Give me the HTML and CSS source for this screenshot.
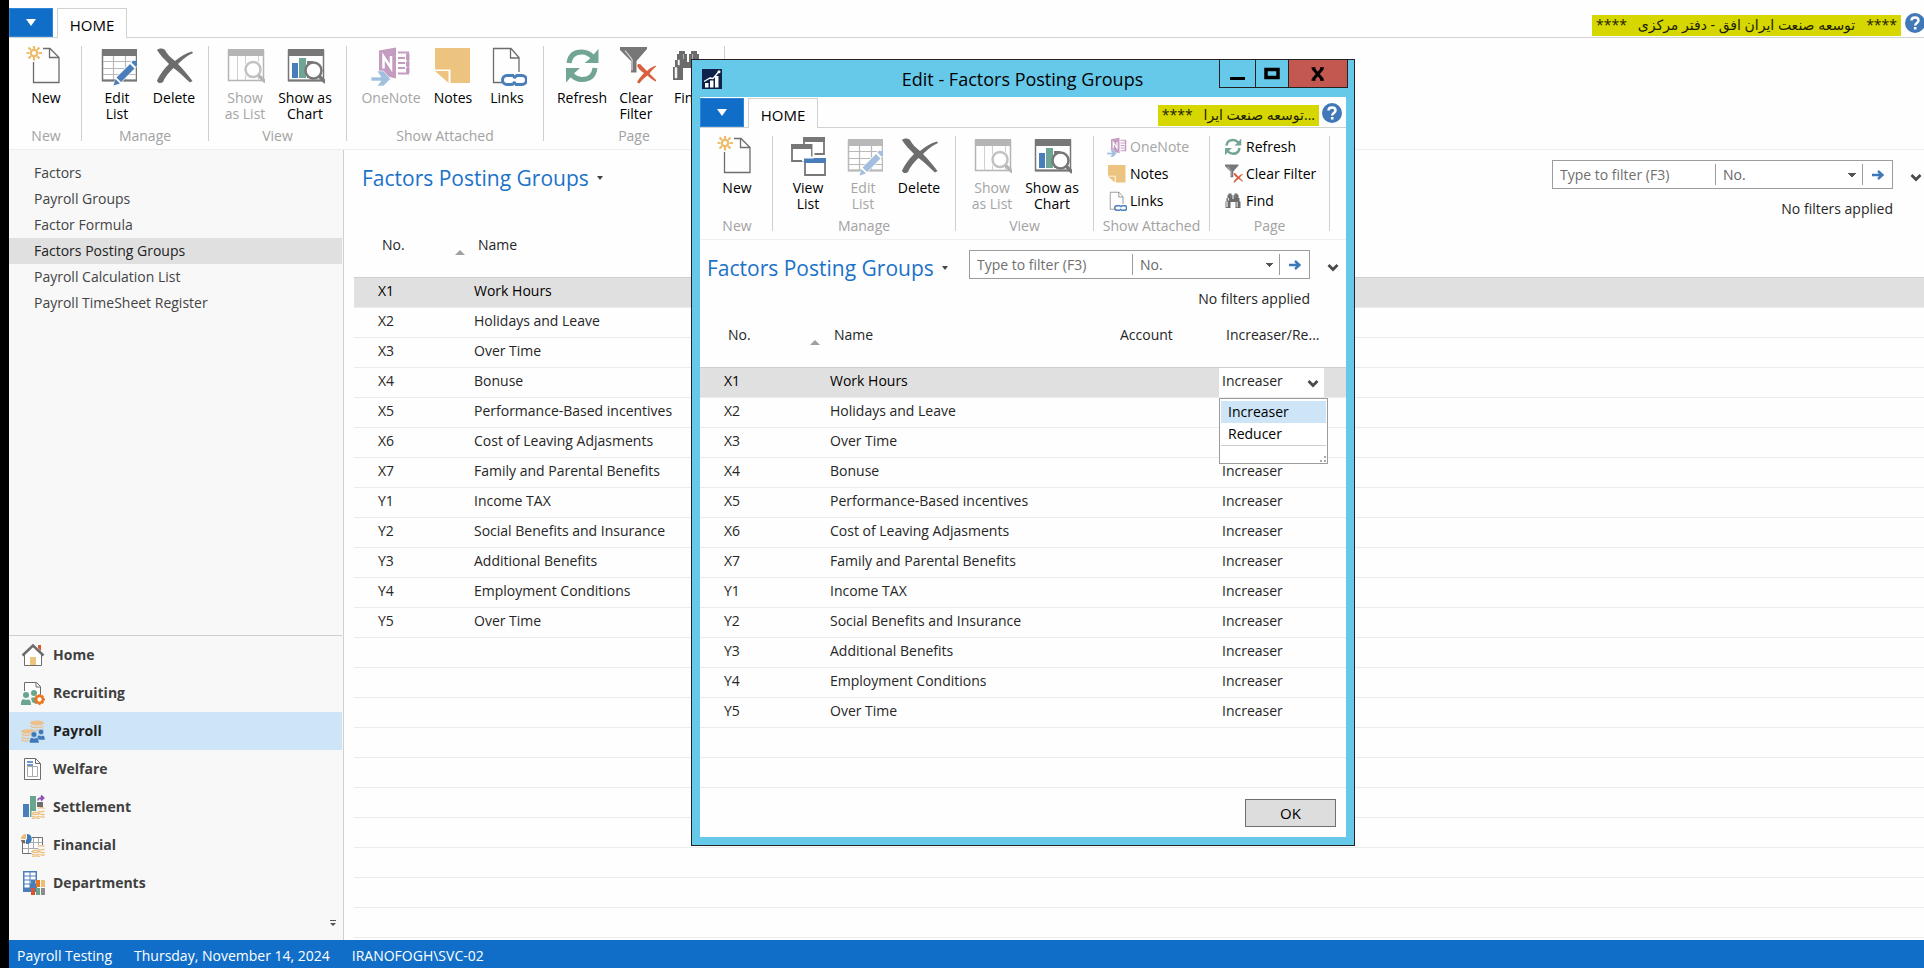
FILE: index.html
```html
<!DOCTYPE html>
<html lang="en">
<head>
<meta charset="utf-8">
<title>Factors Posting Groups</title>
<link rel="stylesheet" href="styles.css">
</head>
<body>
<svg class="sprite" aria-hidden="true">
  <symbol id="i-new" viewBox="0 0 40 40">
    <path d="M7.5 16v20.5h25.500V11.500L24 2.500h-7M23.500 2.500v9h9.500" fill="none" stroke="#6d6d6d" stroke-width="1.300"/>
    <g stroke="#edbd6c" stroke-width="2.200" fill="none"><circle cx="8" cy="7" r="3.200"/><path d="M8 0v3M8 11v3.500M.5 7h3M12.500 7h3.500M2.500 1.500l2.500 2.500M11 10l2.500 2.500M13.500 1.500L11 4M5 10l-2.500 2.500"/></g>
  </symbol>
  <symbol id="i-editlist" viewBox="0 0 40 40">
    <path d="M5.500 4.500h34v30h-34z" fill="#fff" stroke="currentColor" stroke-width="1.500"/>
    <path d="M5 3h35v7H5z" fill="currentColor"/>
    <path d="M6 15.500h33M6 22.500h33M6 28.500h33M16.500 10v24M28.500 10v24" stroke="#b9b9b9" stroke-width="1.200"/>
    <path d="M5 34.500h35" stroke="currentColor" stroke-width="2"/>
    <path d="M16 40l2.500-8L35 14.500l6 5L24 37z" fill="#fff"/>
    <path d="M16.500 39.500l2-6.500 4.500 4.500zM19.500 31.500L33 18l4.500 4.500L24 36zM34.500 16.500l1.500-2 1.500.5 2.500-.5v2.500l1 2-2 2z" fill="var(--pen)"/>
  </symbol>
  <symbol id="i-delete" viewBox="0 0 40 40">
    <path d="M3 4c2-2 6-2 8 0 2 4 6 8 10 11 5-4 11-8 17-9.500l1 1.500C34 9 28 14 24 18c5 5 9 10 14.500 17l-2.500 1.500C31 32 25 26 19.500 22 15 26 11 31 9 36c-2 2-6 1-6-1.500C6 28 10 23 15 18 11 14 6 9 3 4z" fill="#6d6d6d"/>
  </symbol>
  <symbol id="i-showlist" viewBox="0 0 40 40">
    <path d="M3.500 4.500h35v30h-35zM3 34.500h36" fill="none" stroke="#b5b5b5" stroke-width="1.500"/>
    <path d="M3 3h36v7H3z" fill="#b5b5b5"/>
    <path d="M12.500 10v24M20.500 10v24M33.500 10v24" stroke="#d0d0d0"/>
    <circle cx="28" cy="23.500" r="9.500" fill="#fff"/><circle cx="28" cy="23.500" r="7.500" fill="#fff" stroke="#c2c2c2" stroke-width="2.500"/>
    <path d="M33.500 29.500l7 6.500" stroke="#b5b5b5" stroke-width="3.500"/>
  </symbol>
  <symbol id="i-chart" viewBox="0 0 40 40">
    <path d="M3.500 4.500h35v30h-35z" fill="#fff" stroke="#777" stroke-width="1.500"/>
    <path d="M3 3h36v7H3zM3 33.500h36v2H3z" fill="#777"/>
    <path d="M7 17h6v15H7z" fill="#4a7ebb"/><path d="M14 12h7v20h-7z" fill="#6fa594"/><path d="M22 15h6v17h-6z" fill="#777"/>
    <circle cx="28.500" cy="24.500" r="8" fill="#fff" stroke="#777" stroke-width="2.500"/>
    <path d="M34 30l6.500 6.500" stroke="#777" stroke-width="3.500"/>
  </symbol>
  <symbol id="i-onenote" viewBox="0 0 40 40">
    <path d="M8 4.500l17-3v31L8 28.500z" fill="#c39cc0"/>
    <path d="M12.500 22.500v-12l7.500 11.500v-12" fill="none" stroke="#fff" stroke-width="2.500"/>
    <path d="M27 6.500h10v21H27M27 12h7M27 17h7M27 22h7" fill="none" stroke="#c39cc0" stroke-width="2.200"/><path d="M35 8h3.500v6H35zM35 15.500h3.500v5H35zM35 22h3.500v5H35z" fill="#c39cc0"/>
    <path d="M0 31h10l-4-6h6.500l7 8-7 7H6l4-5H0z" fill="#a3bfdf" stroke="#fff" stroke-width=".6"/>
  </symbol>
  <symbol id="i-notes" viewBox="0 0 40 40">
    <path d="M2 2h35v35H17.500V23.500H2z" fill="#ecc480"/><path d="M2 25h13.500v12z" fill="#ecc480"/>
  </symbol>
  <symbol id="i-links" viewBox="0 0 40 40">
    <path d="M15 36.500H6.500v-34H24l8 9V26M23.500 2.500V12H32" fill="none" stroke="#6d6d6d" stroke-width="1.300"/>
    <g fill="none" stroke="#4a7ebb" stroke-width="3"><path d="M27 29.500h-7a4.500 4.500 0 0 0 0 9h4a4.500 4.500 0 0 0 4-3"/><path d="M28 38.500h7a4.500 4.500 0 0 0 0-9h-4a4.500 4.500 0 0 0-4 3"/></g>
  </symbol>
  <symbol id="i-refresh" viewBox="0 0 40 40">
    <g fill="none" stroke="#72a594" stroke-width="5"><path d="M7 17C8 9 13 6 20 6c5 0 8 2 11 5.500"/><path d="M33 22c-1 8-6 11.500-13 11.500-5 0-8-2-11-5.500"/></g>
    <path d="M36.500 3v14H22.500l5-4zM4 36.500V22h14l-5 4.500z" fill="#72a594"/>
  </symbol>
  <symbol id="i-filter" viewBox="0 0 40 40">
    <path d="M4 1h27v2L20.500 15v11.500H15V15L4 4z" fill="#777"/><path d="M9 4.500l7 9v11" fill="none" stroke="#ddd" stroke-width="1.200"/>
    <path d="M21 19c2-2 4-1 5 1l5 5c3-3 6-5 11-6-3 2-6 5-8.500 8.500l8.500 8.500c-4-1-7-3-10.500-6.500C28 32 25 35 23.500 37.500l-2.500-1c1-3 4-6 7-9.500-3-2-6-4-7-8z" fill="#d9603f"/>
  </symbol>
  <symbol id="i-find" viewBox="0 0 40 40">
    <path d="M11 5h6v3h2v8h2V8h2V5h6v3h2v6h2v7h2v13H25V22H15v12H5V21h2v-7h2V8h2z" fill="#6b6b6b"/>
    <path d="M7 21.500V32h2V21.500zM27.500 22v10h1.500V22zM10 14v5h1.500v-5zM15.500 8v5M24.500 8v5" fill="#fff" stroke="#ddd" stroke-width=".6"/>
  </symbol>
  <symbol id="i-viewlist" viewBox="0 0 40 40">
    <g fill="#fff" stroke="#777" stroke-width="1.800"><path d="M16 2h20v16H16z"/><path d="M4 9h20v16H4z"/><path d="M17 23h20v16H17z"/></g>
    <path d="M15 1h22v5H15zM3 8h22v5H3z" fill="#777"/><path d="M16 22h22v5H16z" fill="#4a7ebb"/>
    <path d="M25.500 7v14M14 21.500h12M15 21.500v4" stroke="#fff" stroke-width="2"/>
  </symbol>
  <symbol id="i-help" viewBox="0 0 20 20">
    <circle cx="10" cy="10" r="10" fill="#4178b8"/>
    <path d="M6.500 7.500C6.500 3.500 13.500 3.500 13.500 7.500c0 2.500-3.300 2.500-3.300 5" fill="none" stroke="#fff" stroke-width="2.500"/><path d="M8.900 14h2.600v2.500H8.900z" fill="#fff"/>
  </symbol>
  <symbol id="i-down" viewBox="0 0 12 8"><path d="M1.500 1L6 5.500 10.500 1" fill="none" stroke="#4a4a4a" stroke-width="2.800"/></symbol>
  <symbol id="i-go" viewBox="0 0 12 10"><path d="M0 5h10M6 1l4.500 4L6 9" fill="none" stroke="#3f78b8" stroke-width="2.400"/></symbol>

  <symbol id="n-home" viewBox="0 0 24 24">
    <path d="M3.500 11v11.500h17V11L12 3z" fill="#fff" stroke="#6d6d6d"/><path d="M17 2h3v6l-3-3z" fill="#d9532c"/>
    <path d="M9 14h6v8H9z" fill="#ecc480"/><path d="M1.500 12.500L12 2.500l10.500 10" fill="none" stroke="#6d6d6d" stroke-width="2.500"/>
  </symbol>
  <symbol id="n-recruit" viewBox="0 0 24 24">
    <path d="M3.500 10V1.500h12l4 4V14M15 1.500v4.500h4.500" fill="#fff" stroke="#6d6d6d"/>
    <g fill="#68a58f"><circle cx="5" cy="14" r="3"/><path d="M0 24c0-6 2-6.500 5-5 3-1.500 5 0 5 5z"/><circle cx="13" cy="12" r="3"/><path d="M10 17c3-1 5-1 6 1l-1 5-4-2z"/></g>
    <circle cx="18.500" cy="18.500" r="3.400" fill="#fff" stroke="#e8761f" stroke-width="2.500"/><path d="M18.500 13.200v2M18.500 22v2M13.200 18.500h2M22 18.500h2M14.700 14.700l1.500 1.500M22.300 14.700l-1.500 1.500M14.700 22.300l1.500-1.500M22.300 22.300l-1.500-1.500" stroke="#e8761f" stroke-width="2"/>
  </symbol>
  <symbol id="n-payroll" viewBox="0 0 24 24">
    <g fill="none" stroke="#ecc08a" stroke-width="1.300"><path d="M9.500 7c2 2 11 2 13 0M9.500 10c2 2 11 2 13 0M.5 15c2 2 8 2 10 0M.5 18c2 2 7 2 8 1M.5 20.500c2 2 6 2 8 1"/></g>
    <ellipse cx="16" cy="4" rx="7" ry="2.500" fill="#ecc08a"/><ellipse cx="6" cy="12.500" rx="6" ry="2.200" fill="#ecc08a"/>
    <g fill="#3f78b8" stroke="#cde6f7" stroke-width=".5"><circle cx="20" cy="13" r="2.700"/><path d="M16 21c0-6 2-5 4-4 3-1.500 4 0 4 4z"/><circle cx="13" cy="15.500" r="2.900"/><path d="M8.500 24c0-6 2-6 4.500-4.500 3-1.500 5-1.500 5 4.500z"/></g>
  </symbol>
  <symbol id="n-welfare" viewBox="0 0 24 24">
    <path d="M3.500 1.500h11l5 5v16h-16zM14.500 1.500v5h5" fill="#fff" stroke="#6d6d6d"/><path d="M6 5h6M6 8h6" stroke="#3f78b8" stroke-width="1.300"/><path d="M6.500 9.500h10v10h-10zM11.500 9.500v10" fill="#fff" stroke="#aaa"/>
  </symbol>
  <symbol id="n-settle" viewBox="0 0 24 24">
    <path d="M2 9h6v13H2z" fill="#4a7ebb"/><path d="M9 1h6v21H9z" fill="#68a58f"/><path d="M16 7h6v5h-6z" fill="#6d6d6d"/>
    <path d="M17 5.500c0-2 1-2.500 5-2.500M20 .5L22.500 3 20 5.500" fill="none" stroke="#8a52ae" stroke-width="1.800"/>
    <path d="M10.500 16h9v8h-9z" fill="#f8f8f8"/><path d="M17 13.500c2-1 5-1 6.500 0M17 16c2 1 5 1 6.500 0M19 19c2 1 4 1 4.500 0M19 21.500c2 1 4 1 4.500 0M11 18.500c2-1.500 6-1.500 7.500 0-2 1.500-5.500 1.500-7.500 0zM11 21c2 1.500 6 1.500 7.500 0M11 23c2 1.500 6 1.500 7.500 0" fill="none" stroke="#ecbd7a" stroke-width="1.300"/>
  </symbol>
  <symbol id="n-finance" viewBox="0 0 24 24">
    <path d="M1.500 4.500h20v16h-20z" fill="#fff" stroke="#6d6d6d"/><path d="M2 9.500h19M2 15.500h19M7.500 5v15M12.500 5v15M17.500 5v15" stroke="#aaa"/>
    <path d="M-1 0h12v9H-1z" fill="#f8f8f8"/><path d="M5 1v5H0c0-3 2-5 5-5z" fill="#ecbd7a"/><path d="M6 1c7 0 6 11-1 10V7l1-1z" fill="#3f78b8"/><path d="M0 7h4v3.500C2 10.500 0 9 0 7z" fill="#6d6d6d"/>
    <path d="M10.500 16h13v8h-13zM17 12h7v5h-7z" fill="#f8f8f8"/><path d="M17 13.500c2-1 5-1 6.500 0M17 16c2 1 5 1 6.500 0M19 19c2 1 4 1 4.500 0M19 21.500c2 1 4 1 4.500 0M11 18.500c2-1.500 6-1.500 7.500 0-2 1.500-5.500 1.500-7.500 0zM11 21c2 1.500 6 1.500 7.500 0M11 23c2 1.500 6 1.500 7.500 0" fill="none" stroke="#ecbd7a" stroke-width="1.300"/>
  </symbol>
  <symbol id="n-dept" viewBox="0 0 24 24">
    <path d="M2 0h14v21H2z" fill="#4a7ebb"/><path d="M3.500 1.500h5v3h-5zM9.500 1.500h5v3h-5zM3.500 5.500h5v3h-5zM9.500 5.500h5v3h-5zM3.500 9.500h5v3h-5zM9.500 9.500h5v3h-5zM3.500 13.500h5v3h-5z" fill="#fff"/>
    <path d="M10 9h4v7h-4z" fill="#4a7ebb"/><path d="M15 9h4v7h-4z" fill="#e8761f"/><path d="M20 9h4v7h-4z" fill="#ecbd7a"/><path d="M10 17h4v7h-4z" fill="#d9532c"/><path d="M15 17h4v7h-4z" fill="#68a58f"/><path d="M20 17h4v7h-4z" fill="#8c8c8c"/>
  </symbol>
</svg>

<div class="app">
  <header class="tabs">
    <button class="file" aria-label="Application menu"><span class="tri"></span></button>
    <button class="tab">HOME</button>
    <div class="tabs-end">
      <span class="company" dir="rtl">**** &nbsp; توسعه صنعت ایران افق - دفتر مرکزی &nbsp; ****</span>
      <button class="help" aria-label="Help"><svg><use href="#i-help"/></svg></button>
    </div>
  </header>

  <div class="ribbon">
    <section class="group">
      <div class="tools"><button class="tool w60"><svg><use href="#i-new"/></svg>New</button></div>
      <h2>New</h2>
    </section>
    <section class="group">
      <div class="tools">
        <button class="tool w58"><svg><use href="#i-editlist"/></svg>Edit<br>List</button>
        <button class="tool w56"><svg><use href="#i-delete"/></svg>Delete</button>
      </div>
      <h2>Manage</h2>
    </section>
    <section class="group view">
      <div class="tools">
        <button class="tool w60" disabled><svg><use href="#i-showlist"/></svg>Show<br>as List</button>
        <button class="tool w60"><svg><use href="#i-chart"/></svg>Show as<br>Chart</button>
      </div>
      <h2>View</h2>
    </section>
    <section class="group">
      <div class="tools">
        <button class="tool w76" disabled><svg><use href="#i-onenote"/></svg>OneNote</button>
        <button class="tool w48"><svg><use href="#i-notes"/></svg>Notes</button>
        <button class="tool w60"><svg><use href="#i-links"/></svg>Links</button>
      </div>
      <h2>Show Attached</h2>
    </section>
    <section class="group">
      <div class="tools">
        <button class="tool w64"><svg><use href="#i-refresh"/></svg>Refresh</button>
        <button class="tool w44"><svg><use href="#i-filter"/></svg>Clear<br>Filter</button>
        <button class="tool w60"><svg><use href="#i-find"/></svg>Find</button>
      </div>
      <h2>Page</h2>
    </section>
  </div>

  <div class="body">
    <aside class="side">
      <nav class="pages" aria-label="Pages">
        <a href="#factors">Factors</a>
        <a href="#groups">Payroll Groups</a>
        <a href="#formula">Factor Formula</a>
        <a href="#posting" class="on">Factors Posting Groups</a>
        <a href="#calc">Payroll Calculation List</a>
        <a href="#timesheet">Payroll TimeSheet Register</a>
      </nav>
      <nav class="areas" aria-label="Areas">
        <a href="#home"><svg><use href="#n-home"/></svg>Home</a>
        <a href="#recruiting"><svg><use href="#n-recruit"/></svg>Recruiting</a>
        <a href="#payroll" class="on"><svg><use href="#n-payroll"/></svg>Payroll</a>
        <a href="#welfare"><svg><use href="#n-welfare"/></svg>Welfare</a>
        <a href="#settlement"><svg><use href="#n-settle"/></svg>Settlement</a>
        <a href="#financial"><svg><use href="#n-finance"/></svg>Financial</a>
        <a href="#departments"><svg><use href="#n-dept"/></svg>Departments</a>
      </nav>
      <button class="more" aria-label="Configure areas"><svg viewBox="0 0 6 6"><path d="M0 0h6v1H0zM0 3h6L3 6z" fill="#555"/></svg></button>
    </aside>

    <main class="content">
      <div class="head">
        <h1>Factors Posting Groups <span class="caret"></span></h1>
        <div class="filters">
          <form class="filter">
            <input type="text" placeholder="Type to filter (F3)" aria-label="Filter text">
            <select aria-label="Filter field"><option>No.</option></select>
            <button type="button" aria-label="Apply filter"><svg><use href="#i-go"/></svg></button>
          </form>
          <p>No filters applied</p>
        </div>
        <button class="expand" aria-label="Expand filters"><svg><use href="#i-down"/></svg></button>
      </div>
      <div class="grid">
        <table>
          <thead><tr><th class="c-no">No.<span class="sort"></span></th><th>Name</th></tr></thead>
          <tbody>
            <tr class="on"><td>X1</td><td>Work Hours</td></tr>
            <tr><td>X2</td><td>Holidays and Leave</td></tr>
            <tr><td>X3</td><td>Over Time</td></tr>
            <tr><td>X4</td><td>Bonuse</td></tr>
            <tr><td>X5</td><td>Performance-Based incentives</td></tr>
            <tr><td>X6</td><td>Cost of Leaving Adjasments</td></tr>
            <tr><td>X7</td><td>Family and Parental Benefits</td></tr>
            <tr><td>Y1</td><td>Income TAX</td></tr>
            <tr><td>Y2</td><td>Social Benefits and Insurance</td></tr>
            <tr><td>Y3</td><td>Additional Benefits</td></tr>
            <tr><td>Y4</td><td>Employment Conditions</td></tr>
            <tr><td>Y5</td><td>Over Time</td></tr>
          </tbody>
        </table>
        <div class="blank"></div>
      </div>
    </main>
  </div>

  <footer class="status"><span>Payroll Testing</span><span>Thursday, November 14, 2024</span><span>IRANOFOGH\SVC-02</span></footer>
</div>

<div class="dialog" role="dialog" aria-labelledby="dlg-title">
  <div class="caption">
    <svg class="logo" viewBox="0 0 20 20"><path d="M0 0h20v20H0z" fill="#0d2349"/><path d="M3 14h3.500v4.500H3zM8 11.500h3.500v7H8zM13 7h3.500v11.500H13z" fill="#fff"/><path d="M2 12.500l6-3.500 3 .5L17 2.500" fill="none" stroke="#fff" stroke-width="1.300"/><circle cx="17" cy="2.800" r="1.500" fill="#fff"/></svg>
    <h2 id="dlg-title">Edit - Factors Posting Groups</h2>
    <div class="winbtns">
      <button aria-label="Minimize"><svg viewBox="0 0 16 14"><path d="M0 10h15v3H0z"/></svg></button>
      <button class="max" aria-label="Maximize"><svg viewBox="0 0 16 14"><path d="M2 2.500h12v8H2z" fill="none" stroke="#000" stroke-width="3.500"/></svg></button>
      <button class="close" aria-label="Close"><svg viewBox="0 0 16 14"><path d="M3 1.500l9.500 11M12.500 1.500L3 12.500" stroke="#000" stroke-width="3"/><path d="M1.500 1h4M10 1h4M1.500 13h4M10 13h4" stroke="#000" stroke-width="1.500"/></svg></button>
    </div>
  </div>
  <div class="pane">
    <div class="tabs">
      <button class="file" aria-label="Application menu"><span class="tri"></span></button>
      <button class="tab">HOME</button>
      <div class="tabs-end">
        <span class="company" dir="rtl">...توسعه صنعت ایرا &nbsp; ****</span>
        <button class="help" aria-label="Help"><svg><use href="#i-help"/></svg></button>
      </div>
    </div>
    <div class="ribbon">
      <section class="group">
        <div class="tools"><button class="tool w60"><svg><use href="#i-new"/></svg>New</button></div>
        <h2>New</h2>
      </section>
      <section class="group">
        <div class="tools">
          <button class="tool w58"><svg><use href="#i-viewlist"/></svg>View<br>List</button>
          <button class="tool w52" disabled><svg><use href="#i-editlist"/></svg>Edit<br>List</button>
          <button class="tool w60"><svg><use href="#i-delete"/></svg>Delete</button>
        </div>
        <h2>Manage</h2>
      </section>
      <section class="group view">
        <div class="tools">
          <button class="tool w60" disabled><svg><use href="#i-showlist"/></svg>Show<br>as List</button>
          <button class="tool w60"><svg><use href="#i-chart"/></svg>Show as<br>Chart</button>
        </div>
        <h2>View</h2>
      </section>
      <section class="group attached">
        <div class="stack">
          <button class="mini" disabled><svg><use href="#i-onenote"/></svg>OneNote</button>
          <button class="mini"><svg><use href="#i-notes"/></svg>Notes</button>
          <button class="mini"><svg><use href="#i-links"/></svg>Links</button>
        </div>
        <h2>Show Attached</h2>
      </section>
      <section class="group page">
        <div class="stack">
          <button class="mini"><svg><use href="#i-refresh"/></svg>Refresh</button>
          <button class="mini"><svg><use href="#i-filter"/></svg>Clear Filter</button>
          <button class="mini"><svg><use href="#i-find"/></svg>Find</button>
        </div>
        <h2>Page</h2>
      </section>
    </div>
    <div class="head">
      <h1>Factors Posting Groups <span class="caret"></span></h1>
      <div class="filters">
        <form class="filter">
          <input type="text" placeholder="Type to filter (F3)" aria-label="Filter text">
          <select aria-label="Filter field"><option>No.</option></select>
          <button type="button" aria-label="Apply filter"><svg><use href="#i-go"/></svg></button>
        </form>
        <p>No filters applied</p>
      </div>
      <button class="expand" aria-label="Expand filters"><svg><use href="#i-down"/></svg></button>
    </div>
    <div class="grid">
      <table>
        <thead><tr><th class="c-no">No.<span class="sort"></span></th><th>Name</th><th class="c-acc">Account</th><th class="c-inc">Increaser/Re...</th></tr></thead>
        <tbody>
          <tr class="on"><td>X1</td><td>Work Hours</td><td></td><td class="edit">
            <div class="combo">
              <select aria-label="Increaser/Reducer"><option>Increaser</option><option>Reducer</option></select>
              <svg><use href="#i-down"/></svg>
              <div class="popup">
                <ul role="listbox" aria-label="Choices"><li class="on" role="option" aria-selected="true">Increaser</li><li role="option">Reducer</li></ul>
                <svg viewBox="0 0 6 6"><path d="M4 0h2v2H4zM4 4h2v2H4zM0 4h2v2H0z" fill="#aaa"/></svg>
              </div>
            </div></td></tr>
          <tr><td>X2</td><td>Holidays and Leave</td><td></td><td></td></tr>
          <tr><td>X3</td><td>Over Time</td><td></td><td></td></tr>
          <tr><td>X4</td><td>Bonuse</td><td></td><td>Increaser</td></tr>
          <tr><td>X5</td><td>Performance-Based incentives</td><td></td><td>Increaser</td></tr>
          <tr><td>X6</td><td>Cost of Leaving Adjasments</td><td></td><td>Increaser</td></tr>
          <tr><td>X7</td><td>Family and Parental Benefits</td><td></td><td>Increaser</td></tr>
          <tr><td>Y1</td><td>Income TAX</td><td></td><td>Increaser</td></tr>
          <tr><td>Y2</td><td>Social Benefits and Insurance</td><td></td><td>Increaser</td></tr>
          <tr><td>Y3</td><td>Additional Benefits</td><td></td><td>Increaser</td></tr>
          <tr><td>Y4</td><td>Employment Conditions</td><td></td><td>Increaser</td></tr>
          <tr><td>Y5</td><td>Over Time</td><td></td><td>Increaser</td></tr>
        </tbody>
      </table>
      <div class="blank"></div>
    </div>
    <div class="actions"><button class="ok">OK</button></div>
  </div>
</div>
</body>
</html>
```

FILE: styles.css
```css
* { box-sizing: border-box; }

body {
  margin: 0;
  background: #000;
  color: #262626;
  font: 15px/20px "Open Sans", "Noto Sans", "DejaVu Sans", sans-serif;
}

h1, h2, p, ul { margin: 0; padding: 0; font-weight: 400; }
ul { list-style: none; }
a { color: inherit; text-decoration: none; }
svg { display: block; }
.sprite { position: absolute; width: 0; height: 0; }

button, input, select {
  margin: 0;
  padding: 0;
  border: 0;
  border-radius: 0;
  background: none;
  color: inherit;
  font: inherit;
  appearance: none;
}

.app {
  display: flex;
  flex-direction: column;
  min-height: 100vh;
  margin-left: 9px;
  background: #fefefe;
}

/* Tab strip */
.tabs {
  display: flex;
  align-items: flex-end;
  height: 38px;
  border-bottom: 1px solid #d2d2d2;
}
.file {
  display: flex;
  align-items: center;
  justify-content: center;
  width: 44px;
  height: 29px;
  background: #106ec8;
  border: 1px solid #2f85d6;
}
.tri {
  border: 5px solid transparent;
  border-top: 7px solid #fff;
  border-bottom: 0;
}
.tab {
  width: 70px;
  height: 30px;
  margin: 0 0 -1px 4px;
  padding-top: 2px;
  border: 1px solid #d2d2d2;
  border-bottom: 0;
  background: #fefefe;
  color: #000;
}
.tabs-end {
  display: flex;
  align-items: flex-start;
  gap: 4px;
  margin-left: auto;
  height: 24px;
}
.company {
  height: 21px;
  margin-top: 2px;
  padding: 0 4px;
  background: #d6d700;
  color: #1c1c00;
  font-size: 14px;
  white-space: nowrap;
}
.app .tabs-end { margin-right: -1px; }
.help svg { width: 20px; height: 20px; }

/* Ribbon */
.ribbon {
  display: flex;
  height: 112px;
  padding: 8px 0;
  border-bottom: 1px solid #efefef;
  font-size: 14px;
}
.group {
  display: flex;
  flex-direction: column;
  justify-content: space-between;
  padding: 0 6px;
  border-right: 1px solid #cfcfcf;
}
.group:first-child { padding: 0 5px 0 7px; }
.group h2 {
  color: #a2a2a2;
  font-size: 14px;
  line-height: 10px;
  text-align: center;
  white-space: nowrap;
}
.view { min-width: 138px; }
.attached { min-width: 116px; }
.page { min-width: 120px; }
.tools { display: flex; }
.tool {
  --pen: #4a7ebb;
  display: flex;
  flex-direction: column;
  align-items: center;
  color: #000;
  line-height: 16px;
  white-space: nowrap;
}
.tool svg {
  width: 40px;
  height: 40px;
  margin-bottom: 4px;
  color: #777;
  overflow: visible;
}
.tool:disabled, .mini:disabled { --pen: #a3bfdf; color: #a5a5a5; }
.tool:disabled svg { color: #b9b9b9; }
.w44 { width: 44px; }
.w48 { width: 48px; }
.w52 { width: 52px; }
.w56 { width: 56px; }
.w58 { width: 58px; }
.w60 { width: 60px; }
.w64 { width: 64px; }
.w76 { width: 76px; }
.stack { display: flex; flex-direction: column; margin-top: -3px; padding: 0 7px; }
.mini {
  display: flex;
  align-items: center;
  gap: 3px;
  height: 27px;
  color: #000;
  white-space: nowrap;
}
.mini svg { width: 20px; height: 20px; }

/* Body */
.body { display: flex; flex: 1; }
.side {
  display: flex;
  flex-direction: column;
  width: 335px;
  padding-right: 1px;
  border-right: 1px solid #cfcfcf;
  background: #f8f8f8;
}
.pages { padding-top: 10px; font-size: 14px; }
.pages a {
  display: block;
  padding-left: 25px;
  line-height: 26px;
  color: #444;
}
.pages a.on { background: #e0e0e0; color: #222; }
.areas {
  margin-top: auto;
  border-top: 1px solid #cfcfcf;
  font-size: 14px;
  font-weight: 700;
  color: #404040;
}
.areas a {
  display: flex;
  align-items: center;
  gap: 8px;
  height: 38px;
  padding-left: 12px;
}
.areas a.on { background: #cde5f7; color: #1e1e1e; }
.areas svg { width: 24px; height: 24px; }
.more { align-self: flex-end; margin: 18px 6px 14px; }
.more svg { width: 6px; height: 6px; }

.content { display: flex; flex: 1; flex-direction: column; padding-left: 10px; }
.head { display: flex; align-items: flex-start; padding: 10px 2px 0 8px; }
.head h1 {
  display: flex;
  align-items: center;
  gap: 8px;
  margin-right: auto;
  color: #1b72c8;
  font-size: 21px;
  line-height: 36px;
  white-space: nowrap;
}
.caret {
  border: 3px solid transparent;
  border-top: 4px solid #444;
  border-bottom: 0;
}
.filters { width: 341px; font-size: 14px; text-align: right; }
.filters p { padding-top: 9px; line-height: 22px; }
.filter {
  display: flex;
  align-items: center;
  height: 29px;
  border: 1px solid #9c9c9c;
  background: #fff;
}
.filter input { width: 162px; padding-left: 7px; outline: 0; }
.filter input::placeholder { color: #6f6f6f; opacity: 1; }
.filter select {
  flex: 1;
  height: 21px;
  padding-left: 7px;
  border: solid #9c9c9c;
  border-width: 0 1px;
  background: conic-gradient(from -45deg at 50% 100%, #555 90deg, transparent 0) right 6px center / 8px 4px no-repeat;
  color: #666;
}
.filter button { width: 29px; display: flex; justify-content: center; }
.filter button svg { width: 12px; height: 10px; }
.expand { margin: 14px 0 0 17px; }
.expand svg { width: 12px; height: 8px; }

/* List */
.grid { display: flex; flex: 1; flex-direction: column; padding-top: 7px; font-size: 14px; }
table { width: 100%; border-collapse: collapse; table-layout: fixed; }
th {
  height: 50px;
  padding: 0 0 14px 28px;
  font-weight: 400;
  text-align: left;
  white-space: nowrap;
}
.c-no { width: 96px; position: relative; }
.sort {
  position: absolute;
  left: 101px;
  top: 23px;
  border: 5px solid transparent;
  border-bottom: 5px solid #a0a0a0;
  border-top: 0;
}
td {
  height: 30px;
  padding: 0 0 2px 24px;
  border-bottom: 1px solid #ececec;
  line-height: 20px;
  white-space: nowrap;
}
tr.on td { background: #e0e0e0; color: #000; }
tbody tr.on td { border-top: 1px solid #cfcfcf; }
.blank {
  flex: 1;
  background: repeating-linear-gradient(transparent 0 29px, #ececec 29px 30px);
}

.status {
  display: flex;
  gap: 22px;
  height: 28px;
  padding: 0 8px;
  background: #106ec8;
  color: #fff;
  font-size: 14px;
  line-height: 31px;
}

/* Dialog */
.dialog {
  position: absolute;
  left: 691px;
  top: 59px;
  width: 664px;
  padding: 0 8px 8px;
  border: 1px solid #222;
  background: #66c9ea;
}
.caption { display: flex; align-items: center; height: 37px; padding-left: 2px; }
.logo { width: 20px; height: 20px; }
.caption h2 {
  flex: 1;
  padding-left: 104px;
  color: #000;
  font-size: 18px;
  text-align: center;
}
.winbtns {
  display: flex;
  align-self: flex-start;
  margin-right: -2px;
  border: 1px solid #222;
  border-top: 0;
}
.winbtns button {
  display: flex;
  align-items: center;
  justify-content: center;
  width: 36px;
  height: 27px;
  border-right: 1px solid #222;
}
.winbtns .max { width: 33px; }
.winbtns .close { width: 58px; border: 0; background: #c35850; }
.winbtns svg { width: 16px; height: 14px; }

.pane { background: #fefefe; }
.pane .tabs { height: 31px; }
.pane .tabs-end { gap: 3px; margin-right: 4px; }
.pane .head { padding-left: 7px; padding-right: 7px; }
.pane .grid { flex: none; }
.pane .c-no { width: 106px; }
.pane .sort { left: 110px; }
.pane .c-acc { width: 106px; }
.pane .c-inc { width: 148px; }
.pane .blank { height: 60px; flex: none; }
td.edit { padding: 0 0 0 21px; }
.combo {
  position: relative;
  display: flex;
  align-items: center;
  width: 105px;
  height: 29px;
  background: #fff;
}
.combo select { width: 100%; height: 29px; padding: 0 0 2px 3px; color: #262626; }
.combo > svg { position: absolute; right: 5px; top: 12px; width: 12px; height: 8px; pointer-events: none; }
.popup {
  position: absolute;
  z-index: 1;
  left: 0;
  top: 30px;
  width: 109px;
  height: 66px;
  padding: 2px 1px;
  border: 1px solid #9c9c9c;
  background: #fff;
  color: #000;
}
.popup ul { border-bottom: 1px solid #cfcfcf; }
.popup li { padding-left: 7px; line-height: 22px; }
.popup .on { background: #cde5f7; }
.popup svg { position: absolute; right: 1px; bottom: 1px; width: 6px; height: 6px; }
.actions { display: flex; justify-content: flex-end; padding: 11px 10px 10px; }
.ok {
  width: 91px;
  height: 28px;
  border: 1px solid #707070;
  background: #ddd;
  color: #000;
}
```
